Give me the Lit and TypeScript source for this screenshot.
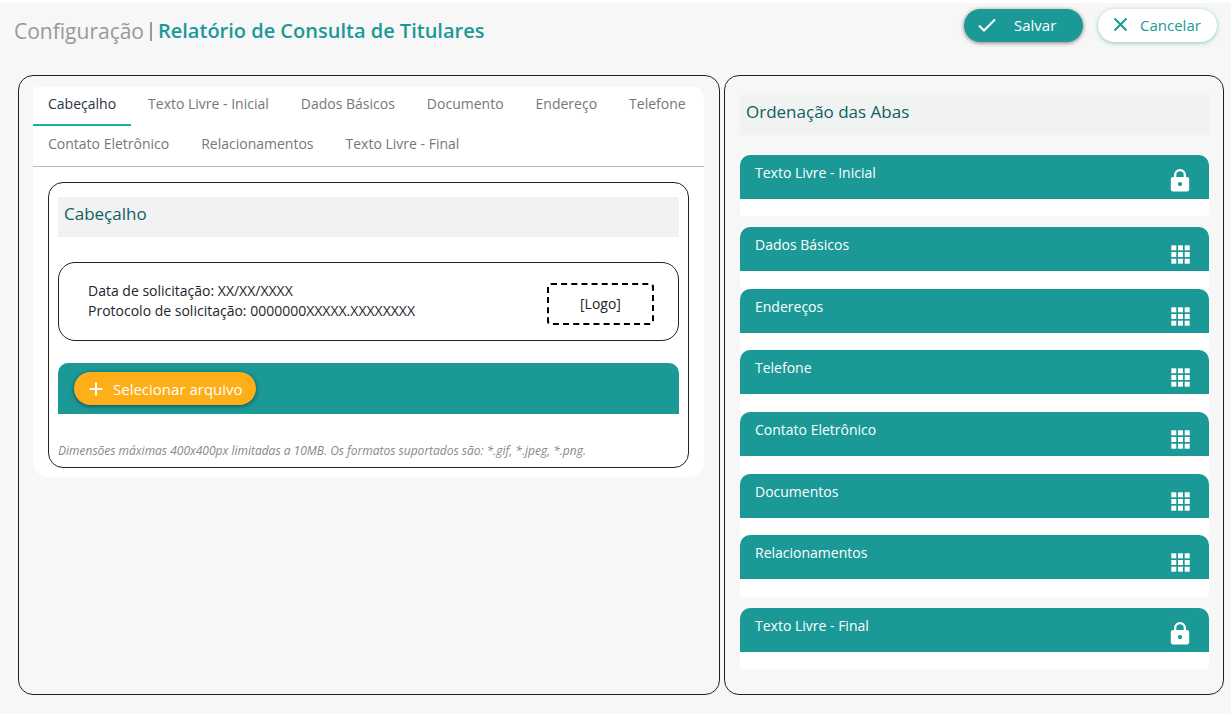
import { LitElement, html, css, svg } from "lit";
import { customElement, property, state } from "lit/decorators.js";

const TABS = [
  "Cabeçalho",
  "Texto Livre - Inicial",
  "Dados Básicos",
  "Documento",
  "Endereço",
  "Telefone",
  "Contato Eletrônico",
  "Relacionamentos",
  "Texto Livre - Final",
];

const MOVABLE = [
  "Dados Básicos",
  "Endereços",
  "Telefone",
  "Contato Eletrônico",
  "Documentos",
  "Relacionamentos",
];

const gridCells = [0, 1, 2].flatMap((row) =>
  [0, 1, 2].map(
    (col) => svg`<rect x=${col * 6.7 + 0.3} y=${row * 6.7 + 0.3} width="5" height="5" />`
  )
);

@customElement("order-item")
class OrderItem extends LitElement {
  @property() label = "";
  @property({ type: Boolean }) locked = false;

  static styles = css`
    :host {
      display: block;
      background: #fff;
      border-radius: 3px;
    }
    .head {
      display: flex;
      justify-content: space-between;
      box-sizing: border-box;
      height: 44px;
      padding: 8px 19px 0 15px;
      border-radius: 10px 10px 0 0;
      background: #1a9997;
      color: #fff;
      font-size: 14px;
      line-height: 20px;
    }
    .icon {
      display: block;
      margin-top: 5px;
      fill: #fff;
    }
    .grid {
      margin-top: 10px;
    }
  `;

  render() {
    return html`<div class="head">
      <span>${this.label}</span>
      ${this.locked
        ? html`<svg class="icon" width="20" height="24" viewBox="0 0 20 24" aria-hidden="true">
            <path
              fill-rule="evenodd"
              d="M4 9V7a6 6 0 0 1 12 0v2h1a2.200 2.200 0 0 1 2.200 2.200v10.300a2.200 2.200 0 0 1-2.200 2H3a2.200 2.200 0 0 1-2.200-2V11.200A2.200 2.200 0 0 1 3 9zM6.300 9h7.400V7a3.700 3.700 0 0 0-7.400 0zM10 14a2.100 2.100 0 1 0 0 4.200a2.100 2.100 0 1 0 0-4.200z"
            />
          </svg>`
        : html`<svg class="icon grid" width="20" height="20" viewBox="-1 0 20 20" aria-hidden="true">
            ${gridCells}
          </svg>`}
    </div>`;
  }
}

@customElement("app-root")
class AppRoot extends LitElement {
  @state() active = 0;

  static styles = css`
    :host {
      display: block;
      box-sizing: border-box;
      min-height: 100vh;
      border-top: 3px solid #fff;
      background: #f7f7f7;
      color: #212529;
      font-family: "Open Sans", "Noto Sans", sans-serif;
      font-size: 14px;
      line-height: 20px;
    }
    .top {
      display: flex;
      justify-content: space-between;
      align-items: flex-start;
      padding: 6px 14px 0;
    }
    .title {
      display: flex;
      align-items: center;
      gap: 6px;
      margin: 6px 0 0;
      font-size: 21px;
      line-height: 32px;
      font-weight: 400;
      color: #999;
    }
    .bar {
      width: 2px;
      height: 19px;
      background: #999;
    }
    .title strong {
      font-size: 20px;
      font-weight: 600;
      color: #1a9997;
    }
    .actions {
      display: flex;
      gap: 15px;
    }
    button {
      margin: 0;
      border: 0;
      font-family: inherit;
      cursor: pointer;
    }
    .pill {
      display: flex;
      align-items: center;
      box-sizing: border-box;
      height: 33px;
      padding: 0 14px 2px;
      border-radius: 17px;
      font-size: 15px;
      line-height: 20px;
      color: #fff;
      box-shadow: 0 1px 4px rgba(0, 0, 0, 0.5);
    }
    .pill svg {
      flex: none;
      fill: none;
      stroke: currentColor;
      stroke-width: 2;
    }
    .save {
      width: 119px;
      gap: 18px;
      background: #1a9997;
    }
    .cancel {
      width: 119px;
      gap: 10px;
      background: #fff;
      color: #1a9997;
      box-shadow: 0 1px 4px rgba(26, 153, 151, 0.5);
    }
    .pick {
      padding: 0 13px 0 15px;
      gap: 10px;
      background: #fdae18;
    }
    main {
      display: grid;
      grid-template-columns: 702fr 500fr;
      gap: 4px;
      padding: 28px 7px 19px 18px;
    }
    .panel {
      box-sizing: border-box;
      border: 1px solid #212121;
      border-radius: 15px;
    }
    .left {
      padding: 11px 15px 15px 14px;
    }
    .right {
      padding: 19px 14px 25px 15px;
    }
    .card {
      background: #fff;
      border-radius: 4px 10px 15px 15px;
      padding-bottom: 9px;
    }
    .tabs {
      display: flex;
      flex-wrap: wrap;
      gap: 1px 2px;
      border-bottom: 1px solid #bbb;
    }
    .tab {
      box-sizing: border-box;
      height: 39px;
      padding: 0 15px 3px;
      border-bottom: 2px solid transparent;
      background: none;
      color: #777;
      font-size: 14px;
      line-height: 20px;
    }
    .tab.on {
      color: #2b3445;
      border-bottom-color: #1ab394;
    }
    .box {
      margin: 15px 15px 0;
      padding: 14px 9px 6px;
      border: 1px solid #212121;
      border-radius: 15px;
    }
    h2 {
      box-sizing: border-box;
      margin: 0;
      height: 40px;
      padding: 5px 6px;
      background: #f0f3f2;
      color: #0f5f60;
      font-size: 17px;
      line-height: 24px;
      font-weight: 400;
    }
    .info {
      display: flex;
      justify-content: space-between;
      align-items: flex-start;
      margin-top: 25px;
      padding: 18px 24px 15px 29px;
      border: 1px solid #212121;
      border-radius: 17px;
    }
    .info p {
      margin: 0;
    }
    .logo {
      display: flex;
      align-items: center;
      justify-content: center;
      box-sizing: border-box;
      width: 107px;
      height: 42px;
      margin-top: 2px;
      border: 2px dashed #000;
      border-radius: 4px;
    }
    .upload {
      margin-top: 22px;
      padding: 9px 16px;
      border-radius: 10px 10px 0 0;
      background: #1a9997;
    }
    .hint {
      margin: 27px 0 0;
      color: #888;
      font-size: 12px;
      line-height: 20px;
      font-style: italic;
    }
    .list {
      display: grid;
      gap: 11px;
      margin-top: 20px;
    }
    .fixed {
      height: 61px;
    }
    .movable {
      display: grid;
      grid-auto-rows: 1fr;
      min-height: 370px;
    }
  `;

  render() {
    return html`
      <header class="top">
        <h1 class="title">
          <span>Configuração</span><span class="bar"></span
          ><strong>Relatório de Consulta de Titulares</strong>
        </h1>
        <div class="actions">
          <button class="pill save" type="button">
            <svg width="18" height="18" viewBox="0 0 18 18" aria-hidden="true">
              <path d="M1 9.500l5 5L17 3.500" />
            </svg>
            <span>Salvar</span>
          </button>
          <button class="pill cancel" type="button">
            <svg width="18" height="18" viewBox="0 0 18 18" aria-hidden="true">
              <path d="M2.500 2.500l12 12M14.500 2.500l-12 12" />
            </svg>
            <span>Cancelar</span>
          </button>
        </div>
      </header>
      <main>
        <section class="panel left">
          <div class="card">
            <div class="tabs" role="tablist">
              ${TABS.map(
                (tab, i) => html`<button
                  type="button"
                  role="tab"
                  class=${i === this.active ? "tab on" : "tab"}
                  aria-selected=${i === this.active}
                  @click=${() => (this.active = i)}
                >${tab}</button>`
              )}
            </div>
            <div class="box">
              <h2>Cabeçalho</h2>
              <div class="info">
                <div>
                  <p>Data de solicitação: XX/XX/XXXX</p>
                  <p>Protocolo de solicitação: 0000000XXXXX.XXXXXXXX</p>
                </div>
                <div class="logo">[Logo]</div>
              </div>
              <div class="upload">
                <button class="pill pick" type="button">
                  <svg width="14" height="14" viewBox="0 0 14 14" aria-hidden="true">
                    <path d="M7 0.500v13M0.500 7h13" />
                  </svg>
                  <span>Selecionar arquivo</span>
                </button>
              </div>
              <p class="hint">
                Dimensões máximas 400x400px limitadas a 10MB. Os formatos suportados são: *.gif,
                *.jpeg, *.png.
              </p>
            </div>
          </div>
        </section>
        <section class="panel right">
          <h2>Ordenação das Abas</h2>
          <div class="list">
            <order-item class="fixed" label="Texto Livre - Inicial" locked></order-item>
            <div class="movable">
              ${MOVABLE.map((name) => html`<order-item label=${name}></order-item>`)}
            </div>
            <order-item class="fixed" label="Texto Livre - Final" locked></order-item>
          </div>
        </section>
      </main>
    `;
  }
}
